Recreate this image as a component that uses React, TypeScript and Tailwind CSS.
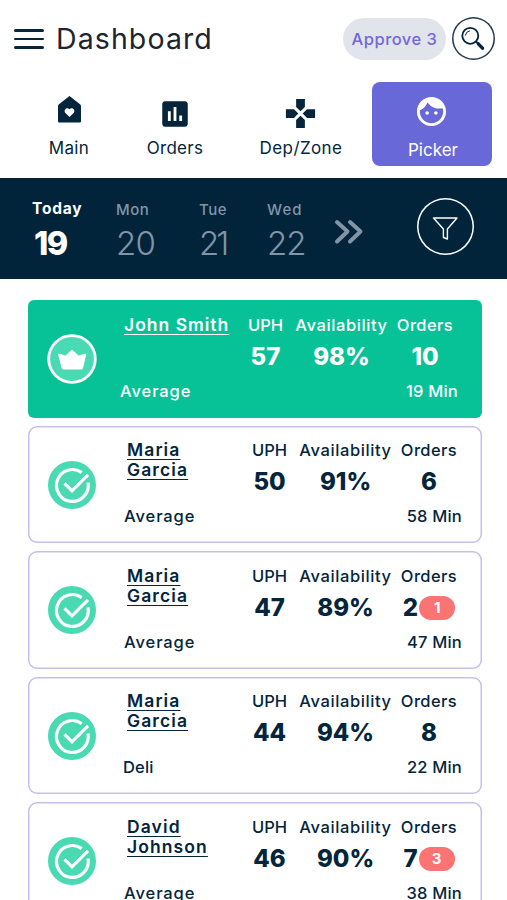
import type { ReactNode } from 'react';
import clsx from 'clsx';
import { MdAssessment, MdFace, MdGamepad } from 'react-icons/md';

const days = [
    { name: 'Mon', date: '20', width: 'w-[83px]', nameStyle: 'tracking-[0.5px]', dateStyle: 'tracking-[-0.8px]' },
    { name: 'Tue', date: '21', width: 'w-[68px]', nameStyle: 'tracking-[0.5px]', dateStyle: 'tracking-[-3px]' },
    { name: 'Wed', date: '22', width: 'w-[67px]', nameStyle: 'tracking-[1.1px]', dateStyle: 'tracking-[-1px]' },
];

const pickers = [
    { name: 'John Smith', dept: 'Average', uph: 57, availability: 98, orders: 10, minutes: 19, best: true },
    { name: 'Maria Garcia', dept: 'Average', uph: 50, availability: 91, orders: 6, minutes: 58 },
    { name: 'Maria Garcia', dept: 'Average', uph: 47, availability: 89, orders: 2, late: 1, minutes: 47 },
    { name: 'Maria Garcia', dept: 'Deli', uph: 44, availability: 94, orders: 8, minutes: 22 },
    { name: 'David Johnson', dept: 'Average', uph: 46, availability: 90, orders: 7, late: 3, minutes: 38 },
];

type Picker = (typeof pickers)[number];

const HomeIcon = () => (
    <svg width="23" height="27" viewBox="0 0 23 27">
        <path
            fill="currentColor"
            fillRule="evenodd"
            d="M11.5 0 L22.3 8.6 Q23 9.2 23 10 V25.3 Q23 26.5 21.8 26.5 H1.2 Q0 26.5 0 25.3 V10 Q0 9.2 .7 8.6 Z M11.5 21 L15.6 16.9 C18 14.2 14.2 10.3 11.5 13.3 C8.8 10.3 5 14.2 7.4 16.9 Z"
        />
    </svg>
);

const SearchIcon = () => (
    <svg width="24" height="25" viewBox="0 0 24 25" fill="none" stroke="currentColor">
        <circle cx="9.3" cy="9.8" r="8" strokeWidth="1.8" />
        <path d="M4.3 9.2 Q5 5.5 8.6 4.8" strokeWidth="1" strokeLinecap="round" />
        <path d="M15 15.5 L17.5 18" strokeWidth="1.8" />
        <path d="M17.3 17.8 L21.5 22.2" strokeWidth="3.4" strokeLinecap="round" />
    </svg>
);

const FilterIcon = () => (
    <svg width="27" height="26" viewBox="0 0 27 26" fill="none" stroke="currentColor" strokeWidth="1.4">
        <path d="M1.5 4 H25 L15.4 15 V25 L11.4 23.5 V15 Z" strokeLinejoin="round" />
    </svg>
);

const NextIcon = () => (
    <svg width="30" height="26" viewBox="0 0 30 26" fill="none" stroke="currentColor" strokeWidth="4" strokeLinecap="round" strokeLinejoin="round">
        <path d="M3 3 L13.5 12.5 L3 22.5 M16 3 L26.5 12.5 L16 22.5" />
    </svg>
);

const CrownBadge = () => (
    <svg width="50" height="50" viewBox="0 0 50 50">
        <circle cx="25" cy="25" r="23.3" fill="#49d9b3" stroke="#fff" strokeWidth="2.8" />
        <path
            d="M11.5 20 L18.5 22 L25 16 L31.5 22 L38.8 20 L35.6 34 Q35.4 35 34.4 35 H16.3 Q15.3 35 15.1 34 Z"
            fill="#fff"
            stroke="#fff"
            strokeLinejoin="round"
        />
    </svg>
);

const CheckBadge = () => (
    <svg width="50" height="50" viewBox="0 0 50 50">
        <circle cx="25" cy="25" r="24" fill="#49d9b3" />
        <g fill="none" stroke="#fff" strokeWidth="3.2">
            <path d="M34.7 12.6 A15.9 15.9 0 1 0 41 22.5" />
            <path d="M17.5 23.3 L25 30.8 L41 14.8" />
        </g>
    </svg>
);

const NavItem = ({ label, className, labelStyle, children }: { label: string; className: string; labelStyle?: string; children: ReactNode }) => (
    <div className={clsx('flex h-[84px] shrink-0 flex-col items-center', className)}>
        <div className="flex h-[54px] items-start">{children}</div>
        <span className={clsx('text-[17px] leading-5', labelStyle)}>{label}</span>
    </div>
);

const Stat = ({ label, className, labelStyle, children }: { label: string; className: string; labelStyle?: string; children: ReactNode }) => (
    <div className={clsx('flex shrink-0 flex-col items-center', className)}>
        <span className={clsx('whitespace-nowrap text-[16.5px] font-medium leading-5', labelStyle)}>{label}</span>
        <span className="mt-[10px] flex h-6 items-center text-[24px] font-extrabold leading-6">{children}</span>
    </div>
);

const PickerCard = ({ picker }: { picker: Picker }) => (
    <div
        className={clsx(
            'flex h-[117.5px] shrink-0 items-center pl-[19px]',
            picker.best ? 'rounded-md bg-[#07c297] text-white' : 'rounded-[9px] bg-white shadow-[inset_0_0_0_1.5px_#c5bff0]',
        )}
    >
        {picker.best ? <CrownBadge /> : <CheckBadge />}
        <div className={clsx('flex h-full flex-col pt-[14.5px]', picker.best ? 'ml-[23px]' : 'ml-[27px]')}>
            <div className="flex h-[66px]">
                <div className={clsx('w-[126px] shrink-0', picker.best ? 'pl-1' : 'pl-[3px] pr-9')}>
                    <span
                        className={clsx(
                            'block text-[17.5px] font-semibold leading-5 underline decoration-1 underline-offset-[3px]',
                            picker.best ? 'whitespace-nowrap tracking-[1px]' : 'tracking-[1.1px]',
                        )}
                    >
                        {picker.name}
                    </span>
                </div>
                <Stat label="UPH" className="w-[39px]">{picker.uph}</Stat>
                <Stat label="Availability" className="w-[113px]" labelStyle="tracking-[0.6px]">
                    {picker.availability}%
                </Stat>
                <Stat label="Orders" className="w-[54px]" labelStyle="tracking-[0.4px]">
                    {picker.orders}
                    {picker.late && (
                        <span className="ml-px flex h-6 w-9 items-center justify-center rounded-full bg-[#fb7373] text-[15px] font-bold text-white">
                            {picker.late}
                        </span>
                    )}
                </Stat>
            </div>
            <div className="flex w-[338px] justify-between text-[16.5px] font-medium leading-5">
                <span className={picker.dept === 'Deli' ? '-ml-px tracking-[0.2px]' : 'tracking-[0.9px]'}>{picker.dept}</span>
                <span className="tracking-[0.2px]">{picker.minutes} Min</span>
            </div>
        </div>
    </div>
);

export default function App() {
    return (
        <div className="flex h-[900px] w-[507px] flex-col overflow-hidden bg-white font-['Inter','Liberation_Sans',sans-serif] text-[#04253b]">
            <header className="flex h-[82px] shrink-0 items-start pl-[14px] pt-[17px]">
                <div className="mt-[12px] flex w-[42px] flex-col gap-[6px]">
                    <span className="h-[2.5px] w-[30px] rounded-full bg-[#04253b]" />
                    <span className="h-[2.5px] w-[30px] rounded-full bg-[#04253b]" />
                    <span className="h-[2.5px] w-[30px] rounded-full bg-[#04253b]" />
                </div>
                <h1 className="w-[287px] text-[28.5px] leading-[44px] tracking-[1.1px] text-[#20242e]">Dashboard</h1>
                <div className="mt-px flex h-[42px] w-[103px] items-center justify-center rounded-full bg-[#e1e4ea] text-[16.5px] font-medium tracking-[0.5px] text-[#7367df]">
                    Approve 3
                </div>
                <div className="ml-[5.5px] flex size-[43px] items-center justify-center rounded-full shadow-[inset_0_0_0_1.5px_#25384c]">
                    <SearchIcon />
                </div>
            </header>

            <nav className="flex h-24 shrink-0 pl-[18px]">
                <NavItem label="Main" className="w-[102px] pt-[1.5px]" labelStyle="tracking-[0.3px]">
                    <div className="pt-[12px]"><HomeIcon /></div>
                </NavItem>
                <NavItem label="Orders" className="w-[110px] pt-[1.5px]" labelStyle="tracking-[0.3px]">
                    <MdAssessment className="mr-px mt-[13px] size-[34px]" />
                </NavItem>
                <NavItem label="Dep/Zone" className="w-[142px] pt-[1.5px]" labelStyle="tracking-[0.4px]">
                    <MdGamepad className="mr-px mt-[12px] size-[35px]" />
                </NavItem>
                <NavItem label="Picker" className="w-[120px] rounded-[8px] bg-[#6968d8] pt-[4px] text-white" labelStyle="pl-[2px]">
                    <MdFace className="mr-px mt-[8px] size-[35px]" />
                </NavItem>
            </nav>

            <section className="flex h-[101px] shrink-0 items-start bg-[#01243b] pl-8 pt-[21px] text-[#8195a6]">
                <div className="w-[84px] text-white">
                    <div className="text-[15.5px] font-bold leading-5 tracking-[0.8px]">Today</div>
                    <div className="mt-[5px] pl-[2px] text-[32.5px] font-extrabold leading-10 tracking-[-1.5px]">19</div>
                </div>
                {days.map((day) => (
                    <div key={day.name} className={day.width}>
                        <div className={clsx('pt-px text-[15px] font-medium leading-5', day.nameStyle)}>{day.name}</div>
                        <div className={clsx('mt-[3px] text-[33px] font-light leading-10', day.dateStyle)}>{day.date}</div>
                    </div>
                ))}
                <div className="mt-[20px] w-[83px]"><NextIcon /></div>
                <div className="-mt-px flex size-[57px] items-center justify-center rounded-full text-white shadow-[inset_0_0_0_1.5px_#fff]">
                    <FilterIcon />
                </div>
            </section>

            <main className="flex flex-col gap-2 pl-7 pr-[25px] pt-[21.25px]">
                {pickers.map((picker, i) => (
                    <PickerCard key={i} picker={picker} />
                ))}
            </main>
        </div>
    );
}
